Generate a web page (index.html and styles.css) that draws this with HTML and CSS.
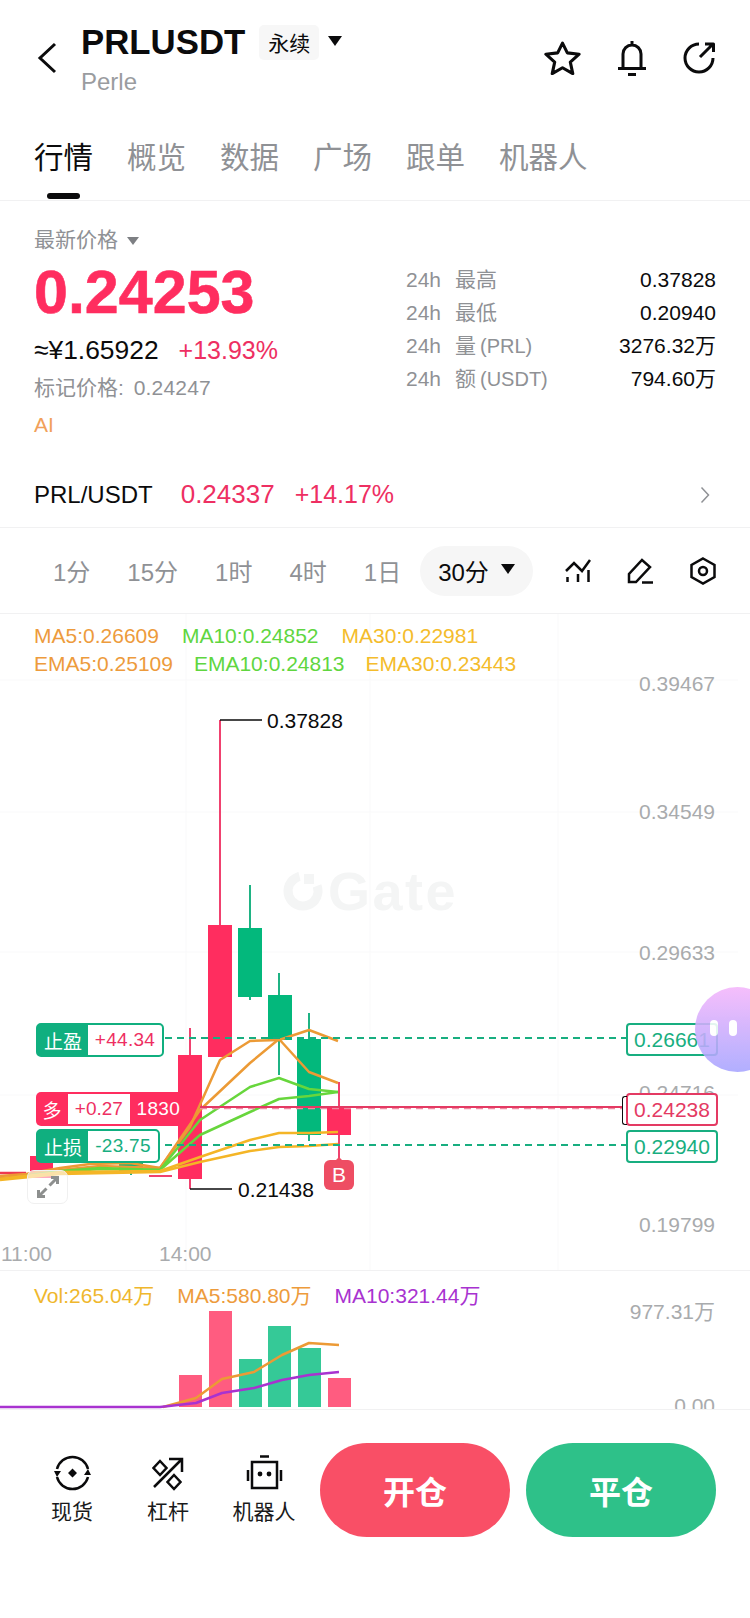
FILE: index.html
```html
<!DOCTYPE html>
<html lang="zh-CN">
<head>
  <meta charset="UTF-8" />
  <meta name="viewport" content="width=device-width, initial-scale=1.0"/>
  <title>PRLUSDT 永续</title>
  <link rel="stylesheet" href="styles.css">
</head>
<body>
  <div class="page">
    <!-- Top bar -->
    <div class="topbar">
      <svg class="back" width="20" height="32" viewBox="0 0 20 32"><path d="M18 2 L3 16 L18 30" /></svg>
      <div class="title-block">
        <div class="title-line">
          <span class="symbol">PRLUSDT</span>
          <span class="badge">永续</span>
          <span class="caret caret-title"></span>
        </div>
        <div class="subtitle">Perle</div>
      </div>
      <div class="top-actions">
        <svg width="37" height="34" viewBox="0 0 36 33"><path d="M18 2 L22.7 11.5 L34.2 12.8 L25.6 20.5 L28 31.7 L18 26 L8 31.7 L10.4 20.5 L1.8 12.8 L13.3 11.5 Z" /></svg>
        <svg width="30" height="36" viewBox="0 0 30 36"><path d="M15 1 V5 M6 28 V14 A9 9 0 0 1 24 14 V28 M1 28.5 H29 M11 34.5 H19" /></svg>
        <svg width="33" height="32" viewBox="0 0 33 32"><path d="M16 2 A14 14 0 1 0 30 16 M17 15 L30 2 M22 2 H30.5 V10" /></svg>
      </div>
    </div>

    <div class="tabs">
      <div class="tab active">行情</div>
      <div class="tab">概览</div>
      <div class="tab">数据</div>
      <div class="tab">广场</div>
      <div class="tab">跟单</div>
      <div class="tab">机器人</div>
    </div>

    <!-- Price summary -->
    <div class="quote">
      <div class="quote-left">
        <div class="last-label">最新价格 <span class="caret caret-gray"></span></div>
        <div class="last-price">0.24253</div>
        <div class="fx-line"><span class="fx-value">≈¥1.65922</span><span class="up">+13.93%</span></div>
        <div class="mark-line">标记价格: <span class="mark-value">0.24247</span></div>
        <div class="ai-line">AI</div>
      </div>
      <div class="quote-right">
        <div class="stat"><span class="stat-period">24h</span><span class="stat-name">最高</span><span class="stat-value">0.37828</span></div>
        <div class="stat"><span class="stat-period">24h</span><span class="stat-name">最低</span><span class="stat-value">0.20940</span></div>
        <div class="stat"><span class="stat-period">24h</span><span class="stat-name">量<span class="stat-unit">(PRL)</span></span><span class="stat-value">3276.32万</span></div>
        <div class="stat"><span class="stat-period">24h</span><span class="stat-name">额<span class="stat-unit">(USDT)</span></span><span class="stat-value">794.60万</span></div>
      </div>
    </div>

    <div class="pair-row">
      <span class="pair-name">PRL/USDT</span>
      <span class="pair-num">0.24337</span>
      <span class="pair-num pair-change">+14.17%</span>
      <svg class="pair-arrow" width="10" height="18" viewBox="0 0 10 18"><path d="M1.5 1.5 L8.5 9 L1.5 16.5" /></svg>
    </div>

    <!-- Interval picker -->
    <div class="intervals">
      <span class="interval">1分</span>
      <span class="interval">15分</span>
      <span class="interval">1时</span>
      <span class="interval">4时</span>
      <span class="interval">1日</span>
      <span class="interval-pill">30分<span class="caret caret-pill"></span></span>
      <div class="chart-tools">
        <svg width="26" height="24" viewBox="0 0 26 24"><path d="M1 12 L9 4 L17 12 L25 1 M2.5 18 V23 M13 15 V23 M23.5 11 V23" /></svg>
        <svg width="27" height="26" viewBox="0 0 27 26"><path d="M2 24 V16 L15 2 L23 9 L9 24 Z M15 24.5 H26" /></svg>
        <svg width="26" height="28" viewBox="0 0 26 28"><path d="M13 1.5 L24.5 8 V20 L13 26.5 L1.5 20 V8 Z" /><circle cx="13" cy="14" r="4" /></svg>
      </div>
    </div>

    <!-- Candles -->
    <div class="chart">
      <svg class="plot" width="750" height="656" viewBox="0 614 750 656">
        <path class="grid" d="M186 614 V1270 M370 614 V1270 M558 614 V1270 M0 680 H738 M0 812 H738 M0 952 H738 M0 1095 H738" />
        <circle class="mark-ring" cx="303" cy="891" r="15" stroke-dasharray="72 23" transform="rotate(-20 303 891)" />
        <rect class="mark-dot" x="304" y="874" width="10" height="10" />
        <text class="mark-text" x="328" y="910">Gate</text>

        <path class="wick-up" d="M220 720 V930 M190 1028 V1189 M339 1082 V1165" />
        <path class="wick-down" d="M250 885 V1000 M279 973 V1075 M309 1013 V1141 M131 1160 V1175" />
        <path class="wick-up" d="M149 1176 H172" />

        <rect class="body-up" x="30" y="1156" width="23" height="22" />
        <rect class="body-down" x="119" y="1163" width="24" height="10" />
        <rect class="body-up" x="178" y="1055" width="24" height="124" />
        <rect class="body-up" x="208" y="925" width="24" height="132" />
        <rect class="body-down" x="238" y="928" width="24" height="69" />
        <rect class="body-down" x="268" y="995" width="24" height="45" />
        <rect class="body-down" x="297" y="1039" width="24" height="96" />
        <rect class="body-up" x="327" y="1107" width="24" height="28" />

        <path class="leader" d="M220 720 H262 M190 1189 H232" />
        <text class="hi-lo" x="267" y="728">0.37828</text>
        <text class="hi-lo" x="238" y="1197">0.21438</text>

        <polyline class="line line-red" points="0,1173 26,1173" />
        <polyline class="line line-ma5" points="0,1176 26,1174 60,1168 90,1164 130,1163 160,1168 190,1127 220,1060 250,1041 279,1040 309,1030 338,1041" />
        <polyline class="line line-ma5" points="0,1178 26,1176 60,1170 100,1166 160,1168 200,1110 250,1063 279,1039 309,1072 338,1083" />
        <polyline class="line line-ma10" points="26,1176 60,1171 100,1168 160,1170 200,1120 250,1087 279,1078 309,1089 338,1092" />
        <polyline class="line line-ma10" points="60,1172 100,1169 160,1170 200,1135 250,1112 279,1099 309,1096 338,1092" />
        <polyline class="line line-ma30" points="0,1179 60,1172 160,1171 200,1157 250,1140 279,1133 309,1133 338,1132" />
        <polyline class="line line-ma30" points="0,1180 60,1174 160,1172 200,1162 250,1151 279,1147 309,1146 338,1144" />

        <path class="dash-green" d="M165 1038 H626 M165 1145 H626" />
        <path class="dash-red" d="M200 1108.5 H622" />
        <path class="line-pos" d="M200 1107 H622" />
      </svg>

      <!-- Legends -->
      <div class="legend legend-ma">
        <span class="c-ma5">MA5:0.26609</span><span class="c-ma10">MA10:0.24852</span><span class="c-ma30">MA30:0.22981</span>
      </div>
      <div class="legend">
        <span class="c-ma5">EMA5:0.25109</span><span class="c-ma10">EMA10:0.24813</span><span class="c-ma30">EMA30:0.23443</span>
      </div>

      <!-- Price axis -->
      <span class="axis-label axis-1">0.39467</span>
      <span class="axis-label axis-2">0.34549</span>
      <span class="axis-label axis-3">0.29633</span>
      <span class="axis-label axis-4">0.24716</span>
      <span class="axis-label axis-5">0.19799</span>
      <span class="time-label time-1">11:00</span>
      <span class="time-label time-2">14:00</span>

      <div class="expand">
        <svg width="22" height="22" viewBox="0 0 22 22"><path d="M12.5 9.5 L20 2 M14 1.5 H20.5 V8 M9.5 12.5 L2 20 M1.5 14 V20.5 H8" /></svg>
      </div>

      <!-- Order tags on the left -->
      <div class="tag tag-tp"><span class="tag-name">止盈</span><span class="tag-value up">+44.34</span></div>
      <div class="tag-long"><span class="long-name">多</span><span class="long-value">+0.27</span><span class="long-qty">1830</span></div>
      <div class="tag tag-sl"><span class="tag-name">止损</span><span class="tag-value green">-23.75</span></div>
      <div class="buy-mark">B</div>

      <!-- Order prices on the right -->
      <div class="price-tag price-tp">0.26661</div>
      <div class="price-tag price-pos">0.24238</div>
      <div class="price-tag price-sl">0.22940</div>

      <div class="bubble"><i></i><i></i></div>
    </div>

    <!-- Volume -->
    <div class="volume">
      <svg class="plot" width="750" height="138" viewBox="0 1271 750 138">
        <rect class="vol-up" x="179" y="1375" width="23" height="32" />
        <rect class="vol-up" x="209" y="1311" width="23" height="96" />
        <rect class="vol-down" x="239" y="1359" width="23" height="48" />
        <rect class="vol-down" x="268" y="1326" width="23" height="81" />
        <rect class="vol-down" x="298" y="1348" width="23" height="59" />
        <rect class="vol-up" x="328" y="1378" width="23" height="29" />
        <polyline class="line line-ma5" points="163,1407 196,1398 222,1379 254,1372 282,1355 309,1343 339,1345" />
        <polyline class="line line-purple" points="0,1407 160,1407 196,1403 222,1393 254,1388 282,1380 309,1375 339,1372" />
      </svg>
      <div class="legend vol-legend">
        <span class="c-vol">Vol:265.04万</span><span class="c-ma5">MA5:580.80万</span><span class="c-purple">MA10:321.44万</span>
      </div>
      <span class="axis-label vol-max">977.31万</span>
      <span class="axis-label vol-min">0.00</span>
    </div>

    <!-- Bottom actions -->
    <div class="actions">
      <div class="shortcut">
        <svg width="37" height="36" viewBox="0 0 37 36"><path class="thin" d="M3 14 A16 16 0 0 1 34 14 M34 22 A16 16 0 0 1 3 22" /><path class="solid" d="M0 16 L7 16 L3 22 Z M37 20 L30 20 L34 14 Z M18.5 13.5 L23 18 L18.5 22.5 L14 18 Z" /></svg>
        <span>现货</span>
      </div>
      <div class="shortcut">
        <svg width="32" height="36" viewBox="0 0 32 32"><path class="thin" d="M2 30 L29.5 2.5 M17 2 H30 V15 M8 4 L14.5 11 L8 18 L1.5 11 Z M22 18 L28.5 25 L22 32 L15.5 25 Z" /></svg>
        <span>杠杆</span>
      </div>
      <div class="shortcut">
        <svg width="37" height="36" viewBox="0 0 37 36"><path class="thin" d="M14 1.5 H23 M6 7 H31 V33 H6 Z M2 15 V26 M35 15 V26" /><circle class="solid" cx="14" cy="19" r="2.4" /><circle class="solid" cx="23" cy="19" r="2.4" /></svg>
        <span>机器人</span>
      </div>
      <div class="trade-btn trade-open">开仓</div>
      <div class="trade-btn trade-close">平仓</div>
    </div>
  </div>
</body>
</html>
```
FILE: styles.css
```css
* {
  box-sizing: border-box;
}
body {
  margin: 0;
  background: #fff;
  color: #0b0b0c;
  font-family: "Liberation Sans", "Noto Sans CJK SC", sans-serif;
}
.page {
  width: 750px;
  height: 1618px;
  overflow: hidden;
}
svg path,
svg polyline,
svg polygon {
  fill: none;
}

.caret {
  display: inline-block;
  width: 0;
  height: 0;
  border-left: 7px solid transparent;
  border-right: 7px solid transparent;
  border-top: 10px solid #0b0b0c;
}

/* Top bar */
.topbar {
  display: flex;
  height: 130px;
  padding: 24px 34px 0 37px;
}
.back {
  margin-top: 18px;
}
.back path {
  stroke: #0b0b0c;
  stroke-width: 3;
}
.title-block {
  margin-left: 24px;
}
.title-line {
  display: flex;
  align-items: center;
  height: 36px;
}
.symbol {
  font-size: 34.8px;
  font-weight: bold;
}
.badge {
  display: flex;
  align-items: center;
  justify-content: center;
  width: 60px;
  height: 35px;
  margin-left: 14px;
  border-radius: 5px;
  background: #f7f7f7;
  font-size: 21px;
}
.caret-title {
  margin: 0 0 2px 9px;
}
.subtitle {
  margin-top: 8px;
  color: #9a9c9f;
  font-size: 24px;
  line-height: 28px;
}
.top-actions {
  display: flex;
  align-items: center;
  gap: 36px;
  height: 36px;
  margin: 16px 0 0 auto;
}
.top-actions path {
  stroke: #0b0b0c;
  stroke-width: 3;
  stroke-linejoin: round;
}

/* Tabs */
.tabs {
  display: flex;
  gap: 34px;
  height: 71px;
  padding: 8px 34px 0;
  border-bottom: 1px solid #f1f1f2;
}
.tab {
  display: flex;
  flex-direction: column;
  align-items: center;
  color: #8f9195;
  font-size: 29.5px;
  line-height: 40px;
}
.tab.active {
  color: #0b0b0c;
}
.tab.active::after {
  content: "";
  width: 33px;
  height: 6px;
  margin-top: 15px;
  border-radius: 3px;
  background: #0b0b0c;
}

/* Price summary */
.quote {
  display: flex;
  justify-content: space-between;
  height: 261px;
  padding: 0 34px;
}
.quote-left {
  padding-top: 25px;
}
.last-label {
  color: #8f9195;
  font-size: 21px;
  line-height: 28px;
}
.caret-gray {
  margin-left: 3px;
  border-left-width: 6px;
  border-right-width: 6px;
  border-top: 8px solid #7d7f83;
  vertical-align: 2px;
}
.last-price {
  margin-top: 8px;
  color: #ff2d5f;
  font-size: 61px;
  font-weight: bold;
  line-height: 60px;
  -webkit-text-stroke: 0.6px #ff2d5f;
}
.fx-line {
  display: flex;
  align-items: baseline;
  gap: 20px;
  margin-top: 13px;
  font-size: 25px;
  line-height: 30px;
}
.fx-value {
  font-size: 26.4px;
}
.up {
  color: #ee2f62;
}
.green {
  color: #18ae80;
}
.mark-line {
  margin-top: 9px;
  color: #8f9195;
  font-size: 21px;
  line-height: 28px;
}
.mark-value {
  margin-left: 4px;
  letter-spacing: 0.2px;
}
.ai-line {
  margin-top: 9px;
  color: #f1a05a;
  font-size: 21px;
  line-height: 28px;
}
.quote-right {
  width: 310px;
  padding-top: 62px;
}
.stat {
  display: flex;
  align-items: baseline;
  height: 33px;
  font-size: 21px;
  line-height: 33px;
}
.stat-period {
  width: 49px;
  color: #8f9195;
}
.stat-name {
  color: #8f9195;
}
.stat-unit {
  margin-left: 4px;
  font-size: 20px;
}
.stat-value {
  margin-left: auto;
}

/* Spot pair */
.pair-row {
  display: flex;
  align-items: center;
  gap: 20px;
  height: 66px;
  padding: 0 40px 0 34px;
  border-bottom: 1px solid #f1f1f2;
  font-size: 26px;
}
.pair-name {
  margin-right: 8px;
  font-size: 24px;
}
.pair-num {
  color: #ee2f62;
}
.pair-change {
  font-size: 25px;
}
.pair-arrow {
  margin-left: auto;
}
.pair-arrow path {
  stroke: #8f9195;
  stroke-width: 1.5;
}

/* Interval picker */
.intervals {
  display: flex;
  align-items: center;
  gap: 37px;
  height: 86px;
  padding: 0 34px 0 53px;
  border-bottom: 1px solid #f1f1f2;
  color: #8f9195;
  font-size: 24px;
  white-space: nowrap;
}
.interval {
  flex-shrink: 0;
}
.interval-pill {
  display: flex;
  flex-shrink: 0;
  align-items: center;
  gap: 12px;
  width: 113px;
  height: 50px;
  margin: 0 -10px 0 -18px;
  padding-left: 18px;
  border-radius: 25px;
  background: #f6f6f6;
  color: #0b0b0c;
}
.caret-pill {
  margin-bottom: 4px;
}
.chart-tools {
  display: flex;
  align-items: center;
  gap: 36px;
  margin-left: auto;
}
.chart-tools path,
.chart-tools circle {
  fill: none;
  stroke: #0b0b0c;
  stroke-width: 2.5;
}

/* Chart */
.chart {
  position: relative;
  height: 657px;
  padding-top: 8px;
  overflow: hidden;
  border-bottom: 1px solid #f1f1f2;
}
.plot {
  position: absolute;
  top: 0;
  left: 0;
}
.legend {
  position: relative;
  display: flex;
  gap: 21px;
  padding-left: 34px;
  font-size: 21px;
  line-height: 28px;
}
.legend-ma {
  gap: 23px;
}
.c-ma5 {
  color: #ed9b3c;
}
.c-ma10 {
  color: #5fd63f;
}
.c-ma30 {
  color: #f4bc2c;
}
.c-vol {
  color: #efb72d;
}
.c-purple {
  color: #a832d0;
}

.grid {
  stroke: #f9f9fa;
  stroke-width: 1;
}
.mark-ring {
  fill: none;
  stroke: #f4f5f5;
  stroke-width: 9;
}
.mark-dot {
  fill: #f4f5f5;
}
.mark-text {
  fill: #f4f5f5;
  font-size: 54px;
  font-weight: bold;
  letter-spacing: 2.5px;
}
.wick-up {
  stroke: #f0416f;
  stroke-width: 2;
}
.wick-down {
  stroke: #1fb384;
  stroke-width: 2;
}
.body-up {
  fill: #ff2d5f;
}
.body-down {
  fill: #03b87c;
}
.leader {
  stroke: #0b0b0c;
  stroke-width: 1.5;
}
.hi-lo {
  fill: #0b0b0c;
  font-size: 21px;
}
.line {
  stroke-width: 2.5;
  stroke-linejoin: round;
}
.line-red {
  stroke: #ee3a4f;
}
.line-ma5 {
  stroke: #ec9a35;
}
.line-ma10 {
  stroke: #67d63c;
}
.line-ma30 {
  stroke: #f4b526;
}
.line-purple {
  stroke: #a832d0;
}
.dash-green {
  stroke: #18ae80;
  stroke-width: 2;
  stroke-dasharray: 7 5;
}
.dash-red {
  stroke: #f08aa2;
  stroke-width: 1.5;
  stroke-dasharray: 7 5;
}
.line-pos {
  stroke: #e43a63;
  stroke-width: 2;
}

.axis-label {
  position: absolute;
  right: 35px;
  color: #a9abad;
  font-size: 21px;
  line-height: 28px;
}
.axis-1 { top: 56px; }
.axis-2 { top: 184px; }
.axis-3 { top: 325px; }
.axis-4 { top: 465px; }
.axis-5 { top: 597px; }
.time-label {
  position: absolute;
  top: 626px;
  color: #a9abad;
  font-size: 21px;
  line-height: 28px;
}
.time-1 { left: 1px; }
.time-2 { left: 159px; }

.expand {
  position: absolute;
  top: 556px;
  left: 27px;
  display: flex;
  align-items: center;
  justify-content: center;
  width: 41px;
  height: 34px;
  border: 1.5px solid #f0f0f0;
  border-radius: 7px;
  background: rgba(255,255,255,0.6);
}
.expand path {
  stroke: #8d8f8e;
  stroke-width: 3;
}

/* Order tags */
.tag {
  position: absolute;
  left: 36px;
  display: flex;
  height: 34px;
  border: 2px solid #10af7f;
  border-radius: 5px;
  background: #10af7f;
}
.tag-tp {
  top: 409px;
  width: 128px;
}
.tag-sl {
  top: 515px;
  width: 124px;
}
.tag-name {
  display: flex;
  align-items: center;
  justify-content: center;
  width: 50px;
  color: #fff;
  font-size: 19px;
}
.tag-value {
  display: flex;
  flex: 1;
  align-items: center;
  justify-content: center;
  border-radius: 0 3px 3px 0;
  background: #fff;
  font-size: 19px;
  letter-spacing: 0.3px;
}
.tag-long {
  position: absolute;
  top: 478px;
  left: 36px;
  display: flex;
  align-items: center;
  width: 144px;
  height: 34px;
  border-radius: 5px 0 0 5px;
  background: #ff2d5f;
  color: #fff;
}
.long-name {
  width: 33px;
  font-size: 19px;
  text-align: center;
}
.long-value {
  width: 63px;
  height: 30px;
  background: #fff;
  color: #ee2f62;
  font-size: 19px;
  line-height: 30px;
  text-align: center;
}
.long-qty {
  margin-left: 7px;
  font-size: 19px;
  letter-spacing: 0.3px;
}
.buy-mark {
  position: absolute;
  top: 546px;
  left: 324px;
  width: 30px;
  height: 30px;
  border-radius: 6px;
  background: #ee4d63;
  color: #fff;
  font-size: 21px;
  line-height: 30px;
  text-align: center;
}
.buy-mark::before {
  content: "";
  position: absolute;
  top: -3px;
  left: 11px;
  border-left: 4px solid transparent;
  border-right: 4px solid transparent;
  border-bottom: 4px solid #ee4d63;
}

.price-tag {
  position: absolute;
  left: 626px;
  width: 92px;
  height: 33px;
  border: 2px solid #18ae80;
  border-radius: 4px;
  background: #fff;
  color: #18ae80;
  font-size: 21px;
  line-height: 29px;
  text-align: center;
}
.price-tp { top: 409px; }
.price-sl { top: 516px; }
.price-pos {
  top: 479px;
  border-color: #e43a63;
  color: #e43a63;
}
.price-pos::before {
  content: "";
  position: absolute;
  top: 1px;
  left: -6px;
  width: 4px;
  height: 27px;
  border: 1.5px solid #0b0b0c;
  border-right: none;
  border-radius: 3px 0 0 3px;
}

.bubble {
  position: absolute;
  top: 373px;
  left: 695px;
  display: flex;
  gap: 11px;
  width: 85px;
  height: 85px;
  padding: 33px 0 0 15px;
  border-radius: 50%;
  background: linear-gradient(#f4b5fb, #a7a5ff);
  opacity: 0.88;
}
.bubble i {
  width: 8px;
  height: 16px;
  border-radius: 4px;
  background: #fff;
}

/* Volume */
.volume {
  position: relative;
  height: 139px;
  padding-top: 11px;
  overflow: hidden;
  border-bottom: 1px solid #f1f1f2;
}
.vol-legend {
  gap: 23px;
}
.vol-up {
  fill: #ff5c80;
}
.vol-down {
  fill: #35c997;
}
.vol-max { top: 27px; }
.vol-min { top: 121px; }

/* Bottom actions */
.actions {
  display: flex;
  align-items: center;
  padding: 33px 34px 0 0;
}
.shortcut {
  display: flex;
  flex-direction: column;
  align-items: center;
  gap: 8px;
  width: 96px;
  color: #1a1a1b;
  font-size: 21px;
  line-height: 26px;
}
.shortcut:first-child {
  width: 72px;
  margin-left: 36px;
}
.shortcut:nth-child(2) {
  width: 120px;
}
.shortcut:nth-child(3) {
  width: 72px;
  margin-right: 20px;
}
.shortcut .thin {
  stroke: #0b0b0c;
  stroke-width: 2.5;
}
.shortcut .solid {
  fill: #0b0b0c;
}
.trade-btn {
  display: flex;
  align-items: center;
  justify-content: center;
  width: 190px;
  height: 94px;
  border-radius: 47px;
  color: #fff;
  font-size: 32px;
  font-weight: bold;
}
.trade-open {
  background: #f94f66;
}
.trade-close {
  margin-left: 16px;
  background: #2ec189;
}
```
